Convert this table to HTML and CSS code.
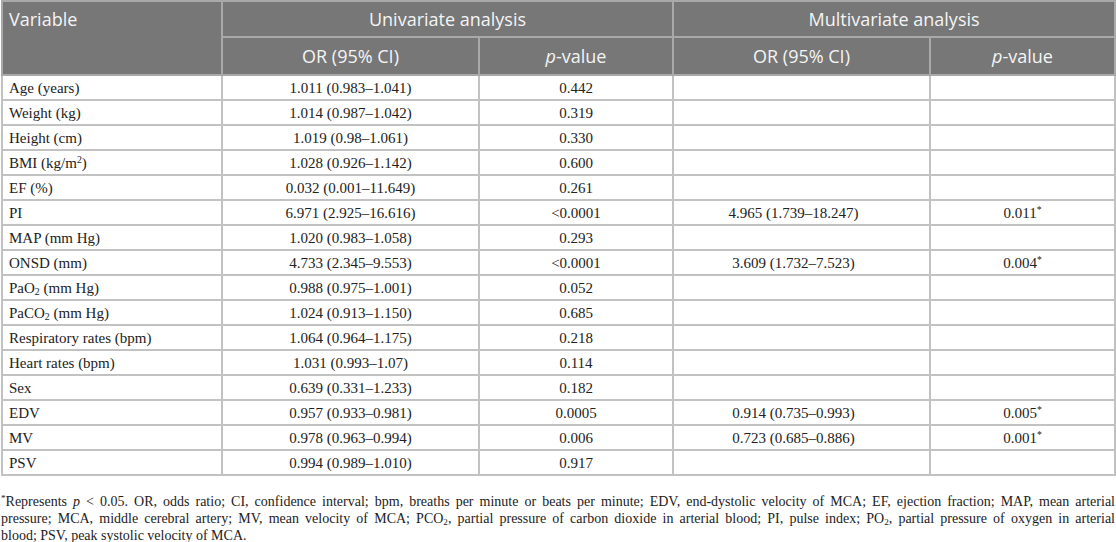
FILE: index.html
```html
<!DOCTYPE html>
<html lang="en">
<head>
  <meta charset="UTF-8">
  <meta name="viewport" content="width=device-width, initial-scale=1.0">
  <title>Univariate and multivariate analysis</title>
  <link rel="stylesheet" href="styles.css">
</head>
<body>

  <div class="table-wrap">
    <table class="stats-table">
      <colgroup>
        <col class="col-var">
        <col class="col-or">
        <col class="col-p">
        <col class="col-or">
        <col class="col-p2">
      </colgroup>
      <thead>
        <tr class="head-top">
          <th class="var-head" rowspan="2">Variable</th>
          <th colspan="2">Univariate analysis</th>
          <th colspan="2">Multivariate analysis</th>
        </tr>
        <tr class="head-sub">
          <th>OR (95% CI)</th>
          <th><i>p</i>-value</th>
          <th>OR (95% CI)</th>
          <th><i>p</i>-value</th>
        </tr>
      </thead>
      <tbody>
        <tr><td>Age (years)</td><td>1.011 (0.983–1.041)</td><td>0.442</td><td class="multi-or"></td><td></td></tr>
        <tr><td>Weight (kg)</td><td>1.014 (0.987–1.042)</td><td>0.319</td><td class="multi-or"></td><td></td></tr>
        <tr><td>Height (cm)</td><td>1.019 (0.98–1.061)</td><td>0.330</td><td class="multi-or"></td><td></td></tr>
        <tr><td>BMI (kg/m<sup>2</sup>)</td><td>1.028 (0.926–1.142)</td><td>0.600</td><td class="multi-or"></td><td></td></tr>
        <tr><td>EF (%)</td><td>0.032 (0.001–11.649)</td><td>0.261</td><td class="multi-or"></td><td></td></tr>
        <tr><td>PI</td><td>6.971 (2.925–16.616)</td><td>&lt;0.0001</td><td class="multi-or">4.965 (1.739–18.247)</td><td>0.011<sup>*</sup></td></tr>
        <tr><td>MAP (mm Hg)</td><td>1.020 (0.983–1.058)</td><td>0.293</td><td class="multi-or"></td><td></td></tr>
        <tr><td>ONSD (mm)</td><td>4.733 (2.345–9.553)</td><td>&lt;0.0001</td><td class="multi-or">3.609 (1.732–7.523)</td><td>0.004<sup>*</sup></td></tr>
        <tr><td>PaO<sub>2</sub> (mm Hg)</td><td>0.988 (0.975–1.001)</td><td>0.052</td><td class="multi-or"></td><td></td></tr>
        <tr><td>PaCO<sub>2</sub> (mm Hg)</td><td>1.024 (0.913–1.150)</td><td>0.685</td><td class="multi-or"></td><td></td></tr>
        <tr><td>Respiratory rates (bpm)</td><td>1.064 (0.964–1.175)</td><td>0.218</td><td class="multi-or"></td><td></td></tr>
        <tr><td>Heart rates (bpm)</td><td>1.031 (0.993–1.07)</td><td>0.114</td><td class="multi-or"></td><td></td></tr>
        <tr><td>Sex</td><td>0.639 (0.331–1.233)</td><td>0.182</td><td class="multi-or"></td><td></td></tr>
        <tr><td>EDV</td><td>0.957 (0.933–0.981)</td><td>0.0005</td><td class="multi-or">0.914 (0.735–0.993)</td><td>0.005<sup>*</sup></td></tr>
        <tr><td>MV</td><td>0.978 (0.963–0.994)</td><td>0.006</td><td class="multi-or">0.723 (0.685–0.886)</td><td>0.001<sup>*</sup></td></tr>
        <tr><td>PSV</td><td>0.994 (0.989–1.010)</td><td>0.917</td><td class="multi-or"></td><td></td></tr>
      </tbody>
    </table>

    <p class="footnote">
      <span class="fn-line"><sup>*</sup>Represents <i>p</i> &lt; 0.05. OR, odds ratio; CI, confidence interval; bpm, breaths per minute or beats per minute; EDV, end-dystolic velocity of MCA; EF, ejection fraction; MAP, mean arterial</span>
      <span class="fn-line">pressure; MCA, middle cerebral artery; MV, mean velocity of MCA; PCO<sub>2</sub>, partial pressure of carbon dioxide in arterial blood; PI, pulse index; PO<sub>2</sub>, partial pressure of oxygen in arterial</span>
      <span class="fn-last">blood; PSV, peak systolic velocity of MCA.</span>
    </p>
  </div>

</body>
</html>
```

FILE: styles.css
```css
body {
  margin: 0;
  padding: 0;
  background-color: #fff;
  font-family: "Liberation Serif", "Times New Roman", serif;
  color: #222;
}

.table-wrap {
  width: 1116px;
}

.stats-table {
  width: 1113px;
  border-collapse: collapse;
  table-layout: fixed;
  margin-left: 1px;
}

.col-var { width: 220px; }
.col-or { width: 257px; }
.col-p { width: 194px; }
.col-p2 { width: 185px; }

.stats-table th,
.stats-table td {
  border: 2px solid #c2c2c2;
  padding: 0 6px;
}

/* header */
.stats-table thead th {
  background-color: #777;
  color: #f4f4f4;
  font-family: "Open Sans", "Noto Sans", sans-serif;
  font-weight: normal;
  font-size: 18px;
  text-align: center;
  border-color: #a9a9a9;
}

.head-top th {
  height: 34px;
}

.head-sub th {
  height: 36px;
}

.stats-table thead th.var-head {
  text-align: left;
  vertical-align: top;
  padding-top: 5px;
}

/* body */
.stats-table td {
  font-size: 15px;
  height: 23px;
  text-align: center;
  line-height: 18px;
}

.stats-table td:first-child {
  text-align: left;
}

.stats-table td.multi-or {
  padding-right: 22px;
}

sup {
  font-size: 0.65em;
  line-height: 0;
  vertical-align: 0.55em;
}

sub {
  font-size: 0.65em;
  line-height: 0;
  vertical-align: -0.2em;
}

/* footnote */
.footnote {
  margin: 17px 1px 0;
  font-size: 14px;
  line-height: 17px;
  color: #222;
}

.fn-line {
  display: block;
  text-align: justify;
  text-align-last: justify;
}

.fn-last {
  display: block;
}
```
